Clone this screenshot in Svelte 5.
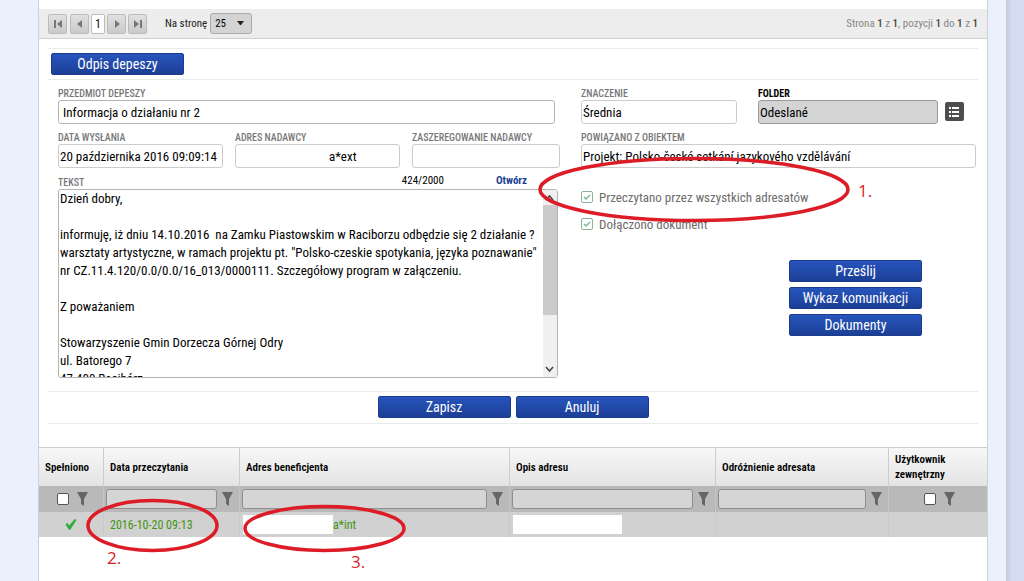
<script>
  const message = `Dzień dobry,

informuję, iż dniu 14.10.2016  na Zamku Piastowskim w Raciborzu odbędzie się 2 działanie ?
warsztaty artystyczne, w ramach projektu pt. "Polsko-czeskie spotykania, języka poznawanie"
nr CZ.11.4.120/0.0/0.0/16_013/0000111. Szczegółowy program w załączeniu.

Z poważaniem

Stowarzyszenie Gmin Dorzecza Górnej Odry
ul. Batorego 7
47-400 Racibórz`;

  const columns = [
    { title: 'Spełniono', share: 64, filter: 'check' },
    { title: 'Data przeczytania', share: 136, filter: 'text' },
    { title: 'Adres beneficjenta', share: 270, filter: 'text' },
    { title: 'Opis adresu', share: 206, filter: 'text' },
    { title: 'Odróżnienie adresata', share: 173, filter: 'text' },
    { title: 'Użytkownik zewnętrzny', share: 99, filter: 'check' }
  ];
  const total = columns.reduce((sum, c) => sum + c.share, 0);
</script>

{#snippet funnel()}
  <svg class="funnel" viewBox="0 0 11 14" aria-hidden="true"><path d="M0 0H11L7 7V14L4 12V7Z" fill="#666" /></svg>
{/snippet}

<div class="page">
  <main class="panel">
    <nav class="pager">
      <button class="step first" aria-label="Pierwsza strona"><svg viewBox="0 0 12 12"><path d="M2 2h2v8H2zM10 2v8L5 6z" /></svg></button>
      <button class="step" aria-label="Poprzednia strona"><svg viewBox="0 0 12 12"><path d="M8 2v8L3 6z" /></svg></button>
      <button class="current">1</button>
      <button class="step" aria-label="Następna strona"><svg viewBox="0 0 12 12"><path d="M4 2v8l5-4z" /></svg></button>
      <button class="step last" aria-label="Ostatnia strona"><svg viewBox="0 0 12 12"><path d="M2 2v8l5-4zM8 2h2v8H8z" /></svg></button>
      <label class="per-page" for="size">Na stronę</label>
      <span class="select">
        <select id="size"><option>25</option></select>
        <svg viewBox="0 0 7 5" aria-hidden="true"><path d="M0 0h7L4 4H3z" fill="#222" /></svg>
      </span>
      <span class="summary">Strona <b>1</b> z <b>1</b>, pozycji <b>1</b> do <b>1</b> z <b>1</b></span>
    </nav>

    <div class="strip top"><button class="action">Odpis depeszy</button></div>

    <form class="form" onsubmit={(e) => e.preventDefault()}>
      <div class="side">
        <div class="field subject">
          <label for="subject">PRZEDMIOT DEPESZY</label>
          <input id="subject" value="Informacja o działaniu nr 2" />
        </div>
        <div class="sender">
          <div class="field">
            <label for="sent">DATA WYSŁANIA</label>
            <input id="sent" class="soft" value="20 października 2016 09:09:14" readonly />
          </div>
          <div class="field">
            <label for="from">ADRES NADAWCY</label>
            <input id="from" class="soft masked" value="a*ext" readonly />
          </div>
          <div class="field">
            <label for="rank">ZASZEREGOWANIE NADAWCY</label>
            <input id="rank" class="soft" readonly />
          </div>
        </div>
        <div class="field body">
          <div class="caption">
            <label for="text">TEKST</label>
            <span class="count">424/2000</span>
            <a href="#text">Otwórz</a>
          </div>
          <div class="editor">
            <textarea id="text" rows="10" value={message}></textarea>
            <div class="scroll" aria-hidden="true">
              <svg viewBox="0 0 13 15"><path d="M3 10l3.500-4L10 10" /></svg>
              <span class="thumb"></span>
              <svg viewBox="0 0 13 15"><path d="M3 5l3.500 4L10 5" /></svg>
            </div>
          </div>
        </div>
      </div>

      <div class="side">
        <div class="meta">
          <div class="field">
            <label for="weight">ZNACZENIE</label>
            <input id="weight" class="soft" value="Średnia" readonly />
          </div>
          <div class="field folder">
            <label for="folder">FOLDER</label>
            <input id="folder" value="Odeslané" />
          </div>
          <button class="list" type="button" aria-label="Wybierz folder">
            <svg viewBox="0 0 18 18"><path d="M4 4h2v2H4zM7 4h7v2H7zM4 8h2v2H4zM7 8h7v2H7zM4 12h2v2H4zM7 12h7v2H7z" fill="#fff" /></svg>
          </button>
        </div>
        <div class="field">
          <label for="object">POWIĄZANO Z OBIEKTEM</label>
          <input id="object" class="soft" value="Projekt: Polsko-české setkání jazykového vzdělávání" readonly />
        </div>
        <div class="flags">
          <label><input type="checkbox" checked disabled />Przeczytano przez wszystkich adresatów</label>
          <label><input type="checkbox" checked disabled />Dołączono dokument</label>
        </div>
        <div class="stack">
          <button class="action" type="button">Prześlij</button>
          <button class="action" type="button">Wykaz komunikacji</button>
          <button class="action" type="button">Dokumenty</button>
        </div>
      </div>
    </form>

    <div class="strip bottom">
      <button class="action">Zapisz</button>
      <button class="action">Anuluj</button>
    </div>

    <table>
      <colgroup>
        {#each columns as c}<col style="width:{(c.share / total) * 100}%" />{/each}
      </colgroup>
      <thead>
        <tr class="titles">
          {#each columns as c}<th scope="col">{c.title}</th>{/each}
        </tr>
        <tr class="filters">
          {#each columns as c}
            <td>
              <div class="filter" class:centered={c.filter === 'check'}>
                {#if c.filter === 'check'}
                  <input type="checkbox" aria-label={c.title} />
                {:else}
                  <input type="text" aria-label={c.title} />
                {/if}
                {@render funnel()}
              </div>
            </td>
          {/each}
        </tr>
      </thead>
      <tbody>
        <tr>
          <td class="done"><svg viewBox="0 0 12 12" aria-label="Spełniono"><path d="M0 6l2-2 2 3L10 0l2 1L5 12H4z" fill="#2fae3c" /></svg></td>
          <td class="date">2016-10-20 09:13</td>
          <td><div class="address"><span class="mask"></span>a*int</div></td>
          <td><div class="address"><span class="mask wide"></span></div></td>
          <td></td>
          <td></td>
        </tr>
      </tbody>
    </table>
  </main>
  <div class="edge"></div>

  <svg class="notes" aria-label="Adnotacje">
    <g fill="none" stroke="#dc1c26" stroke-width="3.500">
      <ellipse cx="694" cy="189.500" rx="154" ry="31" />
      <ellipse cx="152.500" cy="525.500" rx="64.500" ry="25" />
      <ellipse cx="324.500" cy="528.500" rx="79.500" ry="22" />
    </g>
    <g fill="#dc1c26">
      <text x="858" y="197">1.</text>
      <text x="107" y="564">2.</text>
      <text x="351" y="568">3.</text>
    </g>
  </svg>
</div>

<style>
  :global(body) {
    margin: 0;
    background: #ecf0fd;
  }
  .page, .page :is(input, button, select, textarea) {
    font-family: "Roboto Condensed", "Liberation Sans Narrow", Roboto, sans-serif;
  }
  .page *, .page {
    box-sizing: border-box;
  }
  .page {
    position: relative;
    min-height: 100vh;
    display: flex;
    padding-left: 38px;
    color: #000;
    font-size: 13px;
  }
  .edge {
    width: 18px;
    margin-left: 18px;
    background: linear-gradient(90deg, #c3cbe0, #d3dcf1 6px);
  }
  .panel {
    flex: 1;
    min-width: 0;
    background: #fff;
    border: solid #ccd1de;
    border-width: 0 1px;
    padding-top: 9px;
  }
  .pager {
    display: flex;
    align-items: center;
    height: 30px;
    padding: 0 9px;
    background: #ededed;
    border-bottom: 1px solid #cfcfcf;
    font-size: 11px;
    color: #222;
  }
  .pager button {
    display: grid;
    place-items: center;
    height: 20px;
    width: 19px;
    margin-right: 2px;
    padding: 0;
    border: 1px solid #bbb;
    border-radius: 2px;
    background: linear-gradient(#e0e0e0, #cacaca);
    font-size: 12px;
    color: #111;
  }
  .pager button.first { margin-right: 3px; }
  .pager button.current {
    width: 14px;
    background: #fff;
  }
  .step svg {
    width: 12px;
    height: 12px;
    fill: #777;
  }
  .per-page { margin: 0 3px 0 16px; }
  .select {
    display: grid;
    align-items: center;
    width: 42px;
  }
  .select > * { grid-area: 1 / 1; }
  .select select {
    appearance: none;
    height: 21px;
    padding: 0 4px;
    border: 1px solid #aaa;
    border-radius: 3px;
    background: #d4d4d4;
    font-size: 11px;
  }
  .select svg {
    width: 7px;
    height: 5px;
    justify-self: end;
    margin-right: 8px;
    pointer-events: none;
  }
  .summary {
    margin-left: auto;
    color: #888;
  }
  .summary b {
    color: #444;
    font-weight: 500;
  }
  .strip {
    display: flex;
    align-items: center;
    gap: 5px;
    height: 32px;
    margin: 9px 9px 0;
    border: solid #e6ecec;
    border-width: 1px 0;
  }
  .strip.top { padding-left: 3px; }
  .strip.bottom {
    justify-content: center;
    align-items: start;
    padding-top: 4px;
    margin: 13px 9px 23px;
    height: 33px;
  }
  .action {
    width: 133px;
    height: 22px;
    padding: 0;
    border: 1px solid #1c3c8e;
    border-radius: 2px;
    background: linear-gradient(#2755bd, #1c3f95);
    color: #fff;
    font-size: 14px;
    line-height: 20px;
  }
  .form {
    display: grid;
    grid-template-columns: 502fr 395fr;
    gap: 21px;
    padding: 8px 11px 0 19px;
  }
  .side, .field {
    display: flex;
    flex-direction: column;
    min-width: 0;
  }
  .side { gap: 8px; }
  .field label {
    height: 12px;
    line-height: 12px;
    font-size: 10px;
    font-weight: 500;
    color: #777;
    white-space: nowrap;
  }
  .field > input {
    width: 100%;
    height: 24px;
    padding: 0 1px;
    border: 1px solid #b4b4b4;
    border-radius: 3px;
    background: #fff;
    color: #000;
    font-size: 13px;
  }
  .field > input.soft { border-color: #ccc; }
  .field.subject { padding-right: 5px; }
  .field.subject > input { padding-left: 4px; }
  .sender {
    display: grid;
    grid-template-columns: 165fr 165fr 148fr;
    gap: 12px;
  }
  .field > input.masked { padding-left: 93px; }
  .field.body { padding-right: 2px; }
  .caption {
    display: flex;
    height: 13px;
    align-items: end;
    font-size: 11px;
  }
  .caption .count { margin-left: auto; }
  .caption a {
    margin: 0 31px 0 52px;
    color: #1c3f95;
    font-weight: 700;
    text-decoration: none;
  }
  .caption span, .caption a {
    line-height: 16px;
  }
  .editor {
    display: flex;
    border: 1px solid #b4b4b4;
    border-radius: 3px;
    height: 189px;
  }
  textarea {
    flex: 1;
    min-width: 0;
    resize: none;
    border: 0;
    padding: 0 1px;
    background: transparent;
    color: #000;
    font-size: 13px;
    line-height: 18px;
    white-space: pre;
    overflow: hidden;
    outline: 0;
  }
  .scroll {
    display: grid;
    grid-template-rows: 15px 1fr 15px;
    width: 14px;
    background: #f0f0f0;
  }
  .scroll svg {
    width: 13px;
    height: 15px;
    fill: none;
    stroke: #444;
    stroke-width: 1.500;
  }
  .thumb {
    height: 70%;
    background: #cbcbcb;
  }
  .meta {
    display: grid;
    grid-template-columns: 156fr 180fr 5px;
    column-gap: 21px;
    align-items: end;
    padding-right: 12px;
  }
  .folder label {
    color: #000;
    font-weight: 700;
  }
  .field.folder > input {
    background: #d4d4d4;
    border-color: #999;
  }
  .list {
    width: 19px;
    height: 19px;
    margin: 0 0 3px -14px;
    padding: 0;
    border: 0;
    border-radius: 2px;
    background: #4d4d4d;
  }
  .list svg {
    display: block;
    width: 18px;
    height: 18px;
  }
  .flags {
    display: grid;
    gap: 9px;
    padding-top: 12px;
  }
  .flags label {
    display: flex;
    align-items: center;
    gap: 6px;
    height: 18px;
    color: #6c6c6c;
    font-size: 13px;
  }
  .flags input {
    appearance: none;
    width: 12px;
    height: 12px;
    margin: 0;
    border: 1px solid #8fae9c;
    border-radius: 2px;
    background: #fff url("data:image/svg+xml,%3Csvg xmlns='http://www.w3.org/2000/svg' viewBox='0 0 10 10'%3E%3Cpath d='M2 5l2 2 4-4' fill='none' stroke='%2372bd8c' stroke-width='1.500'/%3E%3C/svg%3E");
  }
  .stack {
    display: grid;
    gap: 5px;
    padding-top: 19px;
    justify-content: end;
    margin-right: 54px;
  }
  table {
    width: 100%;
    border-collapse: separate;
    border-spacing: 0;
    table-layout: fixed;
    font-size: 12px;
  }
  th, td {
    padding: 0;
    border-left: 1px solid #cdcdcd;
    text-align: left;
  }
  th {
    height: 39px;
    padding: 0 6px;
    border-top: 1px solid #ccc;
    background: linear-gradient(#f7f7f7, #e4e4e4);
    font-size: 11px;
    font-weight: 600;
    line-height: 15px;
  }
  .filters td {
    height: 26px;
    background: #b9b9b9;
    border-color: #c4c4c4;
  }
  tbody td {
    height: 25px;
    background: #d1d1d1;
    border-color: #c9c9c9;
    color: #3f9412;
  }
  tr > :first-child { border-left: 0; }
  .filter {
    display: flex;
    align-items: center;
    gap: 5px;
    padding: 0 6px 0 2px;
  }
  .filter.centered {
    justify-content: center;
    gap: 8px;
    padding: 0 0 0 2px;
  }
  .filter input[type="text"] {
    flex: 1;
    min-width: 0;
    height: 20px;
    border: 1px solid #8e8e8e;
    border-radius: 3px;
    background: #d5d5d5;
  }
  .filter input[type="checkbox"] {
    appearance: none;
    width: 12px;
    height: 12px;
    margin: 0;
    border: 1px solid #555;
    border-radius: 2px;
    background: #fff;
  }
  .funnel {
    width: 11px;
    height: 14px;
  }
  .done svg {
    display: block;
    width: 12px;
    height: 11px;
    margin: 0 auto;
  }
  tbody td.date { padding-left: 6px; }
  .address {
    display: flex;
    align-items: center;
    padding-left: 3px;
  }
  .mask {
    width: 90px;
    height: 19px;
    background: #fff;
  }
  .mask.wide { width: 109px; }
  .notes {
    position: absolute;
    top: 0;
    left: 0;
    width: 100%;
    height: 100%;
    overflow: visible;
    pointer-events: none;
    font-family: "Open Sans", "Noto Sans", sans-serif;
    font-size: 17px;
  }
</style>
